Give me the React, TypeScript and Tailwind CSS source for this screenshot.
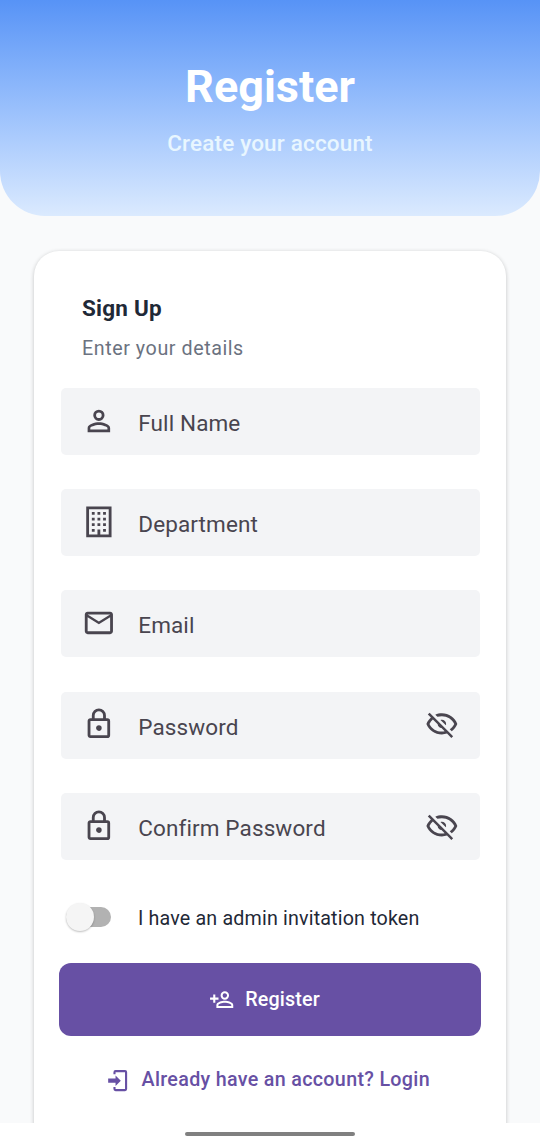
import type { ReactNode } from "react";

const PATHS = {
  account:
    "M12,4A4,4 0 0,1 16,8A4,4 0 0,1 12,12A4,4 0 0,1 8,8A4,4 0 0,1 12,4M12,6A2,2 0 0,0 10,8A2,2 0 0,0 12,10A2,2 0 0,0 14,8A2,2 0 0,0 12,6M12,13C14.67,13 20,14.33 20,17V20H4V17C4,14.33 9.33,13 12,13M12,14.9C9.03,14.9 5.9,16.36 5.9,17V18.1H18.1V17C18.1,16.36 14.97,14.9 12,14.9Z",
  building:
    "M19 3V21H13V17.5H11V21H5V3H19M15 7H17V5H15V7M11 7H13V5H11V7M7 7H9V5H7V7M15 11H17V9H15V11M11 11H13V9H11V11M7 11H9V9H7V11M15 15H17V13H15V15M11 15H13V13H11V15M7 15H9V13H7V15M15 19H17V17H15V19M7 19H9V17H7V19M21 1H3V23H21V1Z",
  email:
    "M22 6C22 4.9 21.1 4 20 4H4C2.9 4 2 4.9 2 6V18C2 19.1 2.9 20 4 20H20C21.1 20 22 19.1 22 18V6M20 6L12 11L4 6H20M20 18H4V8L12 13L20 8V18Z",
  lock: "M12,17C10.89,17 10,16.1 10,15C10,13.89 10.89,13 12,13A2,2 0 0,1 14,15A2,2 0 0,1 12,17M18,20V10H6V20H18M18,8A2,2 0 0,1 20,10V20A2,2 0 0,1 18,22H6C4.89,22 4,21.1 4,20V10C4,8.89 4.89,8 6,8H7V6A5,5 0 0,1 12,1A5,5 0 0,1 17,6V8H18M12,3A3,3 0 0,0 9,6V8H15V6A3,3 0 0,0 12,3Z",
  eyeOff:
    "M2,5.27L3.28,4L20,20.72L18.73,22L15.65,18.92C14.5,19.3 13.28,19.5 12,19.5C7,19.5 2.73,16.39 1,12C1.69,10.24 2.79,8.69 4.19,7.46L2,5.27M12,9A3,3 0 0,1 15,12C15,12.35 14.94,12.69 14.83,13L11,9.17C11.31,9.06 11.65,9 12,9M12,4.5C17,4.5 21.27,7.61 23,12C22.18,14.08 20.79,15.88 19,17.19L17.58,15.76C18.94,14.82 20.06,13.54 20.82,12C19.17,8.64 15.76,6.5 12,6.5C10.91,6.5 9.84,6.68 8.84,7L7.3,5.47C8.74,4.85 10.33,4.5 12,4.5M3.18,12C4.83,15.36 8.24,17.5 12,17.5C12.69,17.5 13.37,17.43 14,17.29L11.72,15C10.29,14.85 9.15,13.71 9,12.28L5.6,8.87C4.61,9.72 3.78,10.78 3.18,12Z",
  accountPlus:
    "M15,4A4,4 0 0,0 11,8A4,4 0 0,0 15,12A4,4 0 0,0 19,8A4,4 0 0,0 15,4M15,5.9C16.16,5.9 17.1,6.84 17.1,8C17.1,9.16 16.16,10.1 15,10.1A2.1,2.1 0 0,1 12.9,8A2.1,2.1 0 0,1 15,5.9M4,7V10H1V12H4V15H6V12H9V10H6V7H4M15,13C12.33,13 7,14.33 7,17V20H23V17C23,14.33 17.67,13 15,13M15,14.9C17.97,14.9 21.1,16.36 21.1,17V18.1H8.9V17C8.9,16.36 12,14.9 15,14.9Z",
  login:
    "M10,17V14H3V10H10V7L15,12L10,17M10,2H19A2,2 0 0,1 21,4V20A2,2 0 0,1 19,22H10A2,2 0 0,1 8,20V18H10V20H19V4H10V6H8V4A2,2 0 0,1 10,2Z",
};

type IconName = keyof typeof PATHS;

function Icon({ name, className }: { name: IconName; className: string }) {
  return (
    <svg viewBox="0 0 24 24" className={`shrink-0 ${className}`} fill="currentColor" fillRule="evenodd" aria-hidden="true">
      <path d={PATHS[name]} />
    </svg>
  );
}

function Field({ icon, children, secret = false }: { icon: IconName; children: ReactNode; secret?: boolean }) {
  return (
    <div className="flex h-[67px] items-center rounded-[5px] bg-[#f3f4f6] pr-[21px] pl-[21px] text-[#49454f]">
      <Icon name={icon} className="mb-[2px] size-[33.75px]" />
      <span className="mt-[3px] ml-[22.5px] flex-1 text-[22.5px] leading-[34px] tracking-[0.12px]">{children}</span>
      {secret && <Icon name="eyeOff" className="mb-[2px] size-[33.75px]" />}
    </div>
  );
}

export default function App() {
  return (
    <div className="flex h-[1146px] w-[540px] flex-col overflow-hidden bg-white font-['Roboto',sans-serif]">
      <div className="flex h-[1123px] shrink-0 flex-col overflow-hidden bg-[#f9fafb]">
        <header className="flex h-[216px] shrink-0 flex-col items-center rounded-b-[45px] bg-linear-to-b from-[#5793f6] to-[#dbeafe] pt-[60px]">
          <h1 className="text-[45px] leading-[54px] font-bold text-white">Register</h1>
          <p className="mt-[14px] text-[22.5px] leading-[30px] font-medium tracking-[0.17px] text-[#e8f6ff]">Create your account</p>
        </header>

        <main className="mx-[34px] mt-[34.6px] h-[920px] shrink-0 rounded-[25px] bg-white pr-[26px] pl-[27px] pt-[40.6px] shadow-[0_1px_4px_rgba(0,0,0,0.22)]">
          <div className="pl-[21px]">
            <h2 className="text-[22.5px] leading-[34px] font-bold tracking-[0.21px] text-[#1f2937]">Sign Up</h2>
            <p className="mt-[10px] text-[19.7px] leading-[28px] tracking-[0.56px] text-[#6b7280]">Enter your details</p>
          </div>

          <div className="mt-[24.7px] flex flex-col gap-[34.25px]">
            <Field icon="account">Full Name</Field>
            <Field icon="building">Department</Field>
            <Field icon="email">Email</Field>
            <Field icon="lock" secret>Password</Field>
            <Field icon="lock" secret>Confirm Password</Field>
          </div>

          <div className="mt-[41.5px] flex h-[32px] items-center pl-[5px]">
            <div className="flex h-[20px] w-[45px] items-center rounded-full bg-[#b2b2b2]">
              <div className="size-[28px] shrink-0 rounded-full bg-[#f5f5f5] shadow-[0_1px_2px_rgba(0,0,0,0.25)]" />
            </div>
            <span className="mt-[3px] ml-[27px] text-[19.7px] leading-[28px] tracking-[0.16px] text-[#1f2937]">I have an admin invitation token</span>
          </div>

          <button className="-ml-[1.6px] mt-[29.8px] flex h-[73px] w-[422px] items-center justify-center rounded-[12px] bg-[#6750a4] pr-[12px] text-white">
            <Icon name="accountPlus" className="size-[25.3px]" />
            <span className="ml-[11px] text-[19.7px] leading-[28px] font-medium tracking-[0.16px]">Register</span>
          </button>

          <button className="mt-[30px] flex h-[28px] w-full items-center justify-center pr-[6px] text-[#6750a4]">
            <Icon name="login" className="size-[25.3px]" />
            <span className="ml-[11.2px] text-[19.7px] leading-[28px] font-medium tracking-[0.32px]">Already have an account? Login</span>
          </button>
        </main>
      </div>
      <div className="mx-auto mt-[9px] h-[4px] w-[170px] shrink-0 rounded-full bg-[#808080]" />
    </div>
  );
}
